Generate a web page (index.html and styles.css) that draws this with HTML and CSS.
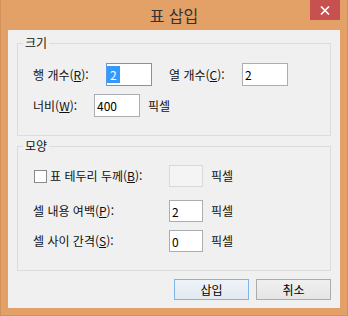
FILE: index.html
```html
<!DOCTYPE html>
<html lang="ko">
<head>
    <meta charset="UTF-8">
    <title>표 삽입</title>
    <link rel="stylesheet" href="styles.css">
</head>
<body>
    <div class="window">
        <div class="titlebar">
            <div class="title">표 삽입</div>
            <div class="close-btn">
                <svg width="10" height="9" viewBox="0 0 10 9">
                    <path d="M1 0.5 L9 8.5 M9 0.5 L1 8.5" stroke="#fff" stroke-width="1.6" fill="none"/>
                </svg>
            </div>
        </div>

        <div class="client">
            <fieldset class="group size-group">
                <legend>크기</legend>
                <div class="row">
                    <label class="lbl lbl-rows">행 개수(<u>R</u>):</label>
                    <div class="field focused"><span class="sel">2</span></div>
                    <label class="lbl lbl-cols">열 개수(<u>C</u>):</label>
                    <input class="field" type="text" value="2">
                </div>
                <div class="row row-gap">
                    <label class="lbl lbl-width">너비(<u>W</u>):</label>
                    <input class="field" type="text" value="400">
                    <span class="unit">픽셀</span>
                </div>
            </fieldset>

            <fieldset class="group look-group">
                <legend>모양</legend>
                <div class="row row-first">
                    <label class="lbl lbl-long check-lbl">
                        <input type="checkbox" class="check">표 테두리 두께(<u>B</u>):
                    </label>
                    <input class="field small" type="text" disabled>
                    <span class="unit">픽셀</span>
                </div>
                <div class="row row-second">
                    <label class="lbl lbl-long">셀 내용 여백(<u>P</u>):</label>
                    <input class="field small" type="text" value="2">
                    <span class="unit">픽셀</span>
                </div>
                <div class="row row-gap">
                    <label class="lbl lbl-long">셀 사이 간격(<u>S</u>):</label>
                    <input class="field small" type="text" value="0">
                    <span class="unit">픽셀</span>
                </div>
            </fieldset>

            <div class="buttons">
                <button class="btn default">삽입</button>
                <button class="btn">취소</button>
            </div>
        </div>
    </div>
</body>
</html>
```

FILE: styles.css
```css
html, body {
    margin: 0;
    padding: 0;
}

body {
    font-family: "Noto Sans CJK KR", "Noto Sans", sans-serif;
    font-size: 12px;
    color: #111;
}

.window {
    width: 348px;
    height: 316px;
    box-sizing: border-box;
    background-color: #e3a067; /* orange frame */
    border: 1px solid #d0915a;
    border-top: none;
    display: flex;
    flex-direction: column;
}

.titlebar {
    height: 30px;
    display: flex;
    align-items: flex-start;
    padding-left: 37px;
}

.title {
    flex: 1;
    text-align: center;
    font-size: 16px;
    line-height: 30px;
    color: #333;
}

.close-btn {
    width: 30px;
    height: 20px;
    margin-right: 7px;
    background-color: #c75050;
    display: flex;
    align-items: center;
    justify-content: center;
}

.client {
    margin: 0 7px 7px;
    flex: 1;
    background-color: #f0f0f0;
    padding: 5px 9px 0;
}

.group {
    margin: 0;
    padding: 0 15px 18px;
    border: 1px solid #dcdcdc;
    min-width: 0;
}

.group legend {
    margin-left: -10px;
    padding: 0 2px;
    line-height: 16px;
}

.look-group {
    margin-top: 2px;
}

.row {
    display: flex;
    align-items: center;
    margin-top: 12px;
    line-height: 16px;
}

.row-gap {
    margin-top: 8px;
}

.row-first {
    margin-top: 11px;
}

.row-second {
    margin-top: 13px;
}

.lbl {
    white-space: nowrap;
}

.lbl-rows {
    width: 73px;
}

.lbl-cols {
    width: 73px;
    margin-left: 17px;
}

.lbl-width {
    width: 61px;
}

.lbl-long {
    width: 136px;
}

.check-lbl {
    display: flex;
    align-items: center;
}

.check {
    appearance: none;
    width: 13px;
    height: 13px;
    margin: 0 3px 0 1px;
    border: 1px solid #8a8a8a;
    background-color: #fff;
    box-sizing: border-box;
}

.field {
    width: 46px;
    height: 23px;
    box-sizing: border-box;
    margin: 0;
    padding: 0 2px;
    border: 1px solid #abadb3;
    background-color: #fff;
    font-family: "Noto Sans CJK KR", "Noto Sans", sans-serif;
    font-size: 12px;
    color: #000;
    outline: none;
}

.field.focused {
    border-color: #569de5;
    display: flex;
    align-items: center;
    padding-left: 0;
}

.sel {
    background-color: #3399ff;
    color: #fff;
    padding: 0 3px;
    line-height: 17px;
}

.field.small {
    width: 34px;
    height: 22px;
}

.field:disabled {
    background-color: #f4f4f4;
    border-color: #d9d9d9;
}

.unit {
    margin-left: 8px;
}

.buttons {
    display: flex;
    justify-content: flex-end;
    gap: 7px;
    margin-top: 8px;
}

.btn {
    width: 75px;
    height: 21px;
    padding: 0;
    border: 1px solid #acacac;
    background: linear-gradient(#f0f0f0, #e5e5e5);
    font-family: "Noto Sans CJK KR", "Noto Sans", sans-serif;
    font-size: 12px;
    color: #000;
}

.btn.default {
    border-color: #7eb4ea;
    background: linear-gradient(#eef3f8, #e3e9f0);
}
```
